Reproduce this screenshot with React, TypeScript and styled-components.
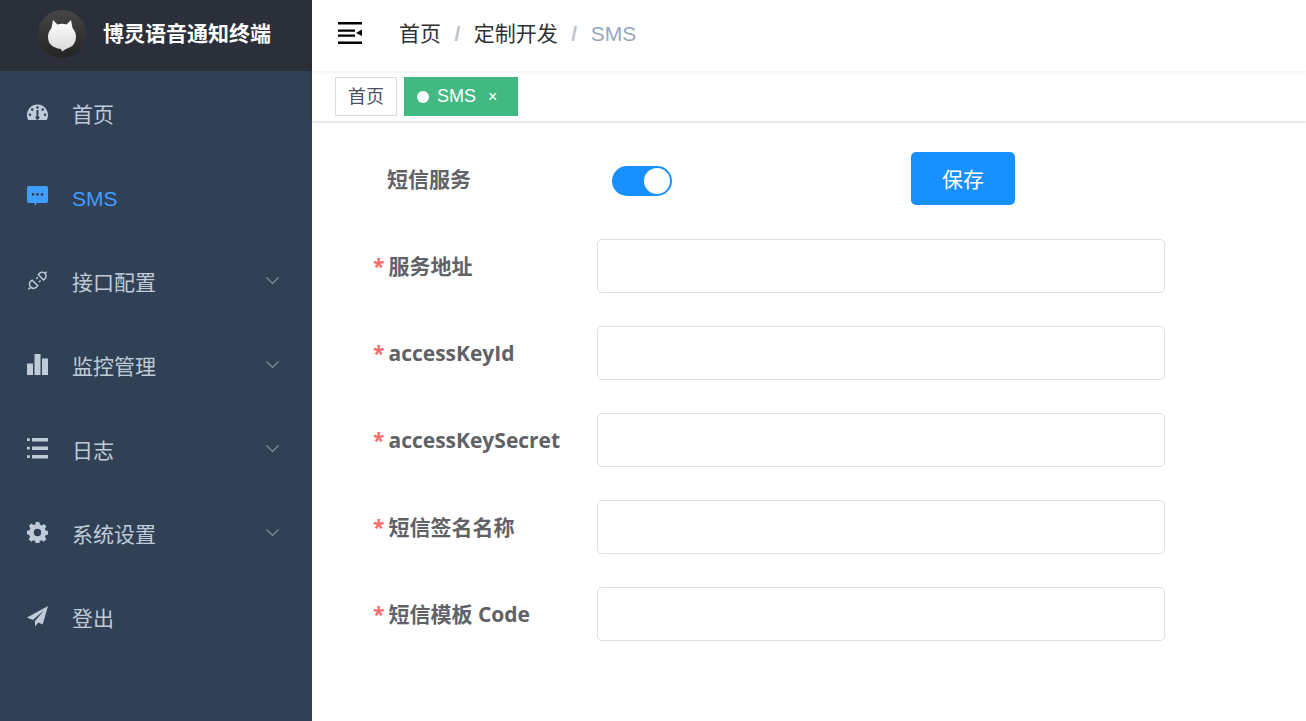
import React, { FC } from 'react';
import styled, { createGlobalStyle } from 'styled-components';

const GlobalStyle = createGlobalStyle`
  html, body {
    margin: 0;
    padding: 0;
    height: 100%;
    overflow: hidden;
    font-family: "Liberation Sans", "Noto Sans CJK SC", sans-serif;
    background: #fff;
  }
`;

const Wrapper = styled.div`
  display: flex;
  width: 1306px;
  height: 721px;
  overflow: hidden;
`;

const Sidebar = styled.aside`
  width: 312px;
  flex-shrink: 0;
  background: #304156;
`;

const Brand = styled.div`
  height: 71px;
  display: flex;
  align-items: center;
  padding: 0 0 4px 38px;
  box-sizing: border-box;
  gap: 17px;
  background: #2b2f3a;
`;

const BrandTitle = styled.h1`
  margin: 0 0 4px;
  font-size: 21px;
  font-weight: 700;
  color: #fff;
  white-space: nowrap;
`;

const Menu = styled.ul`
  list-style: none;
  margin: 1px 0 0;
  padding: 0;
`;

const MenuItem = styled.li<{ $active?: boolean }>`
  height: 84px;
  display: flex;
  align-items: center;
  padding: 0 33px 0 27px;
  font-size: 21px;
  color: ${(p) => (p.$active ? '#409eff' : '#bfcbd9')};
`;

const MenuIcon = styled.svg`
  width: 21px;
  height: 21px;
  margin: -3px 24px 0 0;
  flex-shrink: 0;
  fill: currentColor;
`;

const MenuLabel = styled.span<{ $latin?: boolean }>`
  flex: 1;
  margin-top: ${(p) => (p.$latin ? '2px' : '-2px')};
`;

const Chevron = styled.svg`
  width: 13px;
  height: 7px;
  margin-top: -4px;
  fill: none;
  stroke: #8492a3;
  stroke-width: 1.1;
`;

const Main = styled.main`
  flex: 1;
  min-width: 0;
  display: flex;
  flex-direction: column;
`;

const Navbar = styled.header`
  position: relative;
  z-index: 1;
  height: 71px;
  display: flex;
  align-items: center;
  padding-left: 26px;
  box-sizing: border-box;
  background: #fff;
  box-shadow: 0 1px 4px rgba(0, 21, 41, 0.08);
`;

const Hamburger = styled.svg`
  width: 24px;
  height: 22px;
  margin: 0 37px 5px 0;
  fill: #000;
`;

const Crumbs = styled.nav`
  display: flex;
  align-items: center;
  margin-bottom: 4px;
  font-size: 21px;
  color: #303133;
`;

const CrumbLink = styled.span`
  margin-bottom: 4px;
`;

const CrumbSep = styled.span`
  margin: 0 13.5px;
  font-weight: 700;
  color: #c0c4cc;
`;

const CrumbCurrent = styled.span`
  color: #97a8be;
`;

const TagsBar = styled.div`
  height: 50px;
  display: flex;
  align-items: flex-start;
  gap: 7px;
  padding: 6px 0 0 23px;
  box-sizing: border-box;
  background: #fff;
  box-shadow: 0 1px 3px 0 rgba(0, 0, 0, 0.16), 0 0 3px 0 rgba(0, 0, 0, 0.04);
`;

const Tag = styled.div<{ $active?: boolean }>`
  height: 39px;
  display: flex;
  align-items: center;
  box-sizing: border-box;
  padding: ${(p) => (p.$active ? '0 20px 0 12px' : '0 12px 4px')};
  font-size: 18px;
  border: 1px solid ${(p) => (p.$active ? '#42b983' : '#d8dce5')};
  background: ${(p) => (p.$active ? '#42b983' : '#fff')};
  color: ${(p) => (p.$active ? '#fff' : '#495060')};
`;

const TagDot = styled.span`
  width: 12px;
  height: 12px;
  border-radius: 50%;
  background: #fff;
  margin-right: 8px;
`;

const TagClose = styled.span`
  margin-left: 12px;
  font-size: 16px;
`;

const Form = styled.form`
  display: flex;
  flex-direction: column;
  gap: 33px;
  padding: 31px 0 0 60px;
`;

const SwitchRow = styled.div`
  display: flex;
  align-items: center;
  margin-bottom: 1px;
`;

const FieldRow = styled.div`
  display: flex;
  align-items: center;
`;

const FieldLabel = styled.label<{ $plain?: boolean; $latin?: boolean }>`
  width: 225px;
  flex-shrink: 0;
  box-sizing: border-box;
  margin-top: ${(p) => (p.$latin ? '0' : '-2px')};
  padding-left: ${(p) => (p.$plain ? '15px' : '1px')};
  font-family: "Open Sans", "Noto Sans CJK SC", sans-serif;
  font-size: 21px;
  font-weight: 700;
  color: #606266;
  white-space: nowrap;
`;

const Star = styled.span`
  color: #f56c6c;
  margin-right: 4px;
`;

const Input = styled.input`
  width: 568px;
  height: 54px;
  box-sizing: border-box;
  border: 1px solid #dcdfe6;
  border-radius: 5px;
  background: #fff;
  outline: none;
`;

const Switch = styled.span`
  width: 60px;
  height: 30px;
  margin: 4px 0 0 15px;
  border-radius: 15px;
  background: #1890ff;
  display: flex;
  align-items: center;
  justify-content: flex-end;
  padding-right: 2px;
  box-sizing: border-box;
`;

const SwitchKnob = styled.span`
  width: 26px;
  height: 26px;
  border-radius: 50%;
  background: #fff;
`;

const SaveButton = styled.button`
  width: 104px;
  height: 53px;
  margin-left: 239px;
  padding: 0 0 2px;
  border: 0;
  border-radius: 5px;
  background: #1890ff;
  color: #fff;
  font-family: inherit;
  font-size: 21px;
`;

const Logo: FC = () => (
  <svg width="48" height="48" viewBox="0 0 48 48">
    <defs>
      <linearGradient id="disc" x1="0" y1="0" x2="0" y2="1">
        <stop offset="0" stopColor="#474747" />
        <stop offset="1" stopColor="#232323" />
      </linearGradient>
      <linearGradient id="cat" x1="0" y1="0" x2="0" y2="1">
        <stop offset="0" stopColor="#ffffff" />
        <stop offset="1" stopColor="#d8d8d8" />
      </linearGradient>
    </defs>
    <circle cx="24" cy="24" r="24" fill="url(#disc)" />
    <path
      d="M15 10 L19.5 14.5 Q24 13.2 28.5 14.5 L33 10 L34.500 18 Q38 22 38 27 Q38 36 28 39 L24 41.500 L23 39 Q10 37 10 27 Q10 22 13.500 18 Z"
      fill="url(#cat)"
    />
  </svg>
);

const icons: Record<string, React.ReactNode> = {
  dashboard: (
    <path
      fillRule="evenodd"
      d="M10.500 2.500C4.700 2.500 0 7.200 0 13c0 1.800.4 3.500 1.300 5h18.400c.9-1.500 1.300-3.200 1.300-5 0-5.800-4.700-10.500-10.500-10.500zM10.500 4.200a1.300 1.300 0 1 1 0 2.600 1.300 1.300 0 0 1 0-2.600zM5.300 6.300a1.300 1.300 0 1 1 0 2.600 1.300 1.300 0 0 1 0-2.600zM15.700 6.300a1.300 1.300 0 1 1 0 2.600 1.300 1.300 0 0 1 0-2.600zM3 11.500a1.300 1.300 0 1 1 0 2.600 1.300 1.300 0 0 1 0-2.600zM18 11.500a1.300 1.300 0 1 1 0 2.600 1.300 1.300 0 0 1 0-2.600zM11.600 8l-.3 5.900a1.900 1.900 0 1 1-1.700 0L9.400 8z"
    />
  ),
  chat: (
    <path
      fillRule="evenodd"
      d="M2 0h17a2 2 0 0 1 2 2v13a2 2 0 0 1-2 2h-9.500L8 20.500 7.500 17H2a2 2 0 0 1-2-2V2a2 2 0 0 1 2-2zM6 7a1.400 1.400 0 1 0 0 2.800A1.400 1.400 0 0 0 6 7zM10.500 7a1.400 1.400 0 1 0 0 2.800 1.400 1.400 0 0 0 0-2.800zM15 7a1.400 1.400 0 1 0 0 2.800A1.400 1.400 0 0 0 15 7z"
    />
  ),
  plug: (
    <g fill="none" stroke="currentColor" strokeWidth="1.500">
      <path d="M1.300 19.500l2.300-2M17.600 3.800l2.100-2" />
      <path d="M3.600 11.300l1.500-1.100 5.600 5.300-1.200 1.600a3.700 3.700 0 0 1-5.300.3 3.900 3.900 0 0 1-.6-6.100z" />
      <path d="M11.400 4.500l1.300-1.300a3.700 3.700 0 0 1 5.200 0 3.800 3.800 0 0 1 .1 5.400l-1.400 1.300z" />
      <path d="M9.300 8.800l1.700-1.600M12 12l1.600-1.500" />
    </g>
  ),
  chart: <path d="M0 9.500h6V21H0zM7.500 0h6v21h-6zM15 4.500h6V21h-6z" />,
  list: (
    <path d="M5 0h16v3.500H5zM5 8.500h16V12H5zM5 17h16v3.500H5zM0 .3h2.800v2.800H0zM0 8.800h2.800v2.800H0zM0 17.300h2.800v2.800H0z" />
  ),
  gear: (
    <path
      fillRule="evenodd"
      d="M8.700 0h3.600l.5 2.600 1.900.8 2.200-1.500 2.500 2.500-1.500 2.200.8 1.900 2.600.5v3.600l-2.600.5-.8 1.900 1.500 2.200-2.500 2.500-2.200-1.500-1.900.8-.5 2.600H8.700l-.5-2.600-1.900-.8-2.200 1.500-2.500-2.500 1.500-2.200-.8-1.900L0 12.300V8.700l2.600-.5.8-1.900-1.500-2.200 2.500-2.500 2.200 1.500 1.900-.8zM10.500 6.800a3.700 3.700 0 1 0 0 7.400 3.700 3.700 0 0 0 0-7.400z"
    />
  ),
  plane: <path d="M21 0L0 11.500l5.800 2.400L17 4.500 8 15v5.500l3.300-3.900 4.400 1.900z" />,
};

const menu = [
  { icon: 'dashboard', label: '首页' },
  { icon: 'chat', label: 'SMS', active: true },
  { icon: 'plug', label: '接口配置', sub: true },
  { icon: 'chart', label: '监控管理', sub: true },
  { icon: 'list', label: '日志', sub: true },
  { icon: 'gear', label: '系统设置', sub: true },
  { icon: 'plane', label: '登出' },
];

const fields = [
  { name: '服务地址' },
  { name: 'accessKeyId', latin: true },
  { name: 'accessKeySecret', latin: true },
  { name: '短信签名名称' },
  { name: '短信模板 Code' },
];

const App: FC = () => (
  <>
    <GlobalStyle />
    <Wrapper>
      <Sidebar>
        <Brand>
          <Logo />
          <BrandTitle>博灵语音通知终端</BrandTitle>
        </Brand>
        <Menu>
          {menu.map((item) => (
            <MenuItem key={item.label} $active={item.active}>
              <MenuIcon viewBox="0 0 21 21">{icons[item.icon]}</MenuIcon>
              <MenuLabel $latin={item.active}>{item.label}</MenuLabel>
              {item.sub && (
                <Chevron viewBox="0 0 13 7">
                  <path d="M.5.5l6 6 6-6" />
                </Chevron>
              )}
            </MenuItem>
          ))}
        </Menu>
      </Sidebar>
      <Main>
        <Navbar>
          <Hamburger viewBox="0 0 24 22">
            <path d="M0 0h24v2.400H0zM0 7.500h17v2.300H0zM0 12.500h17v2.300H0zM0 19.600h24V22H0zM24 7.500v6.600L18 11z" />
          </Hamburger>
          <Crumbs>
            <CrumbLink>首页</CrumbLink>
            <CrumbSep>/</CrumbSep>
            <CrumbLink>定制开发</CrumbLink>
            <CrumbSep>/</CrumbSep>
            <CrumbCurrent>SMS</CrumbCurrent>
          </Crumbs>
        </Navbar>
        <TagsBar>
          <Tag>首页</Tag>
          <Tag $active>
            <TagDot />
            SMS
            <TagClose>×</TagClose>
          </Tag>
        </TagsBar>
        <Form>
          <SwitchRow>
            <FieldLabel $plain>短信服务</FieldLabel>
            <Switch>
              <SwitchKnob />
            </Switch>
            <SaveButton type="button">保存</SaveButton>
          </SwitchRow>
          {fields.map((field) => (
            <FieldRow key={field.name}>
              <FieldLabel $latin={field.latin}>
                <Star>*</Star>
                {field.name}
              </FieldLabel>
              <Input />
            </FieldRow>
          ))}
        </Form>
      </Main>
    </Wrapper>
  </>
);

export default App;
